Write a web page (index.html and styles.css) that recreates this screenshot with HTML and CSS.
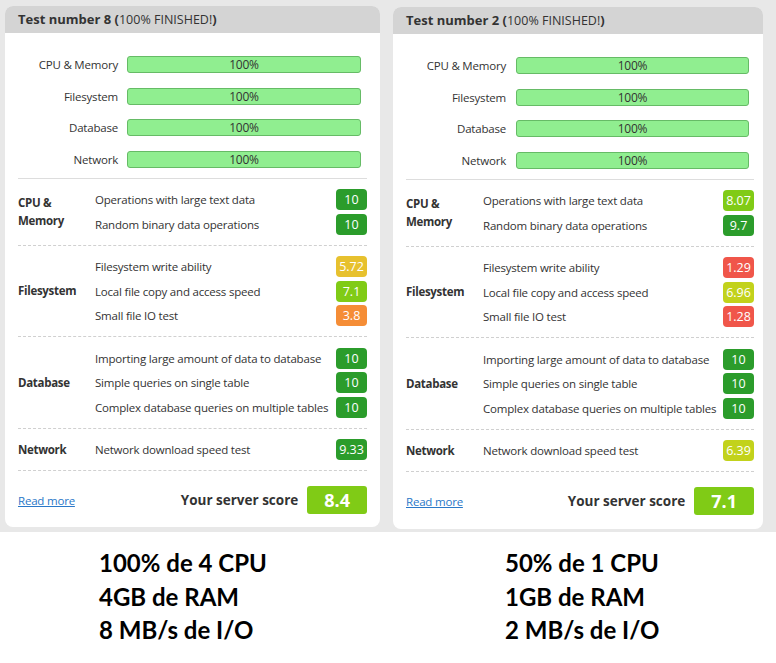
FILE: index.html
```html
<!DOCTYPE html>
<html lang="en">
<head>
    <meta charset="UTF-8">
    <meta name="viewport" content="width=device-width, initial-scale=1.0">
    <title>Server benchmark results</title>
    <link rel="stylesheet" href="styles.css">
</head>
<body>

    <div class="top">
        <!-- Test 8 -->
        <div class="card card-left">
            <div class="card-head"><b>Test number 8 (</b>100% FINISHED!<b>)</b></div>
            <div class="card-body">
                <div class="progress">
                    <span class="p-label">CPU &amp; Memory</span><div class="bar">100%</div>
                    <span class="p-label">Filesystem</span><div class="bar">100%</div>
                    <span class="p-label">Database</span><div class="bar">100%</div>
                    <span class="p-label">Network</span><div class="bar">100%</div>
                </div>

                <div class="section">
                    <div class="cat">CPU &amp;<br>Memory</div>
                    <div class="items">
                        <div class="item"><span>Operations with large text data</span><span class="badge green">10</span></div>
                        <div class="item"><span>Random binary data operations</span><span class="badge green">10</span></div>
                    </div>
                </div>
                <div class="section">
                    <div class="cat">Filesystem</div>
                    <div class="items">
                        <div class="item"><span>Filesystem write ability</span><span class="badge yellow">5.72</span></div>
                        <div class="item"><span>Local file copy and access speed</span><span class="badge lime">7.1</span></div>
                        <div class="item"><span>Small file IO test</span><span class="badge orange">3.8</span></div>
                    </div>
                </div>
                <div class="section">
                    <div class="cat">Database</div>
                    <div class="items">
                        <div class="item"><span>Importing large amount of data to database</span><span class="badge green">10</span></div>
                        <div class="item"><span>Simple queries on single table</span><span class="badge green">10</span></div>
                        <div class="item"><span>Complex database queries on multiple tables</span><span class="badge green">10</span></div>
                    </div>
                </div>
                <div class="section">
                    <div class="cat">Network</div>
                    <div class="items">
                        <div class="item"><span>Network download speed test</span><span class="badge green">9.33</span></div>
                    </div>
                </div>

                <div class="card-foot">
                    <a href="#" class="more">Read more</a>
                    <span class="score-label">Your server score</span>
                    <span class="score lime">8.4</span>
                </div>
            </div>
        </div>

        <!-- Test 2 -->
        <div class="card card-right">
            <div class="card-head"><b>Test number 2 (</b>100% FINISHED!<b>)</b></div>
            <div class="card-body">
                <div class="progress">
                    <span class="p-label">CPU &amp; Memory</span><div class="bar">100%</div>
                    <span class="p-label">Filesystem</span><div class="bar">100%</div>
                    <span class="p-label">Database</span><div class="bar">100%</div>
                    <span class="p-label">Network</span><div class="bar">100%</div>
                </div>

                <div class="section">
                    <div class="cat">CPU &amp;<br>Memory</div>
                    <div class="items">
                        <div class="item"><span>Operations with large text data</span><span class="badge lime">8.07</span></div>
                        <div class="item"><span>Random binary data operations</span><span class="badge green">9.7</span></div>
                    </div>
                </div>
                <div class="section">
                    <div class="cat">Filesystem</div>
                    <div class="items">
                        <div class="item"><span>Filesystem write ability</span><span class="badge red">1.29</span></div>
                        <div class="item"><span>Local file copy and access speed</span><span class="badge olive">6.96</span></div>
                        <div class="item"><span>Small file IO test</span><span class="badge red">1.28</span></div>
                    </div>
                </div>
                <div class="section">
                    <div class="cat">Database</div>
                    <div class="items">
                        <div class="item"><span>Importing large amount of data to database</span><span class="badge green">10</span></div>
                        <div class="item"><span>Simple queries on single table</span><span class="badge green">10</span></div>
                        <div class="item"><span>Complex database queries on multiple tables</span><span class="badge green">10</span></div>
                    </div>
                </div>
                <div class="section">
                    <div class="cat">Network</div>
                    <div class="items">
                        <div class="item"><span>Network download speed test</span><span class="badge olive">6.39</span></div>
                    </div>
                </div>

                <div class="card-foot">
                    <a href="#" class="more">Read more</a>
                    <span class="score-label">Your server score</span>
                    <span class="score lime">7.1</span>
                </div>
            </div>
        </div>
    </div>

    <div class="notes">
        <div class="note note-left">100% de 4 CPU<br>4GB de RAM<br>8 MB/s de I/O</div>
        <div class="note note-right">50% de 1 CPU<br>1GB de RAM<br>2 MB/s de I/O</div>
    </div>

</body>
</html>
```

FILE: styles.css
```css
body {
    margin: 0;
    font-family: "Open Sans", "Noto Sans", sans-serif;
    font-size: 11.5px;
    letter-spacing: -0.2px;
    color: #333;
    background-color: #fff;
}
.top {
    display: flex;
    align-items: flex-start;
    gap: 13px;
    height: 532px;
    padding: 6px 0 0 5px;
    box-sizing: border-box;
    background-color: #e8e8e8;
}
.card {
    background-color: #fff;
    border-radius: 8px;
    overflow: hidden;
}
.card-left {
    width: 375px;
    height: 521px;
}
.card-right {
    width: 370px;
    height: 522px;
    margin-top: 1px;
}
.card-head {
    height: 27px;
    line-height: 27px;
    padding: 0 13px;
    background-color: #d4d4d4;
    font-size: 12.5px;
    letter-spacing: 0;
}
.card-head b {
    font-size: 13px;
}
.card-body {
    padding: 0 13px;
}
.card-right .card-body {
    padding-right: 9px;
}
.progress {
    display: grid;
    grid-template-columns: 100px 1fr;
    column-gap: 9px;
    row-gap: 14.5px;
    align-items: center;
    padding: 23px 6px 10px 0;
    border-bottom: 1px solid #ddd;
}
.card-right .progress {
    column-gap: 10px;
    padding-right: 5px;
}
.p-label {
    text-align: right;
}
.bar {
    height: 15px;
    line-height: 15px;
    text-align: center;
    font-size: 12px;
    background-color: #90ee90;
    border: 1px solid #66bb66;
    border-radius: 3px;
}
.section {
    display: flex;
    padding: 9px 0 8px;
    border-bottom: 1px dashed #d0d0d0;
}
.cat {
    width: 77px;
    flex-shrink: 0;
    display: flex;
    align-items: center;
    font-weight: bold;
    font-size: 11.5px;
    letter-spacing: -0.3px;
    line-height: 18px;
}
.items {
    flex: 1;
}
.item {
    display: flex;
    align-items: center;
    justify-content: space-between;
    height: 24.5px;
    white-space: nowrap;
}
.badge {
    width: 31px;
    height: 21px;
    line-height: 21px;
    text-align: center;
    color: #fff;
    border-radius: 4px;
    font-size: 12.5px;
    letter-spacing: 0;
}
.green { background-color: #2b9c2b; }
.lime { background-color: #80cb16; }
.yellow { background-color: #e7c12e; }
.orange { background-color: #f58d36; }
.red { background-color: #f0564a; }
.olive { background-color: #c2d21b; }

.card-foot {
    display: flex;
    align-items: center;
    padding: 15px 0 0;
}
.more {
    color: #2a78c8;
    text-decoration: underline;
    font-size: 11.5px;
}
.score-label {
    margin-left: auto;
    margin-right: 9px;
    font-weight: bold;
    font-size: 13.5px;
    letter-spacing: 0;
}
.score {
    height: 28px;
    line-height: 28px;
    padding: 0 17px;
    color: #fff;
    font-weight: bold;
    font-size: 18px;
    letter-spacing: 0;
    border-radius: 3px;
}

.notes {
    display: flex;
    padding-top: 14px;
}
.note {
    font-family: Lato, "Open Sans", sans-serif;
    font-weight: bold;
    font-size: 24px;
    letter-spacing: 0;
    line-height: 33.5px;
    color: #000;
}
.note-left {
    margin-left: 99px;
    width: 406px;
}
```
